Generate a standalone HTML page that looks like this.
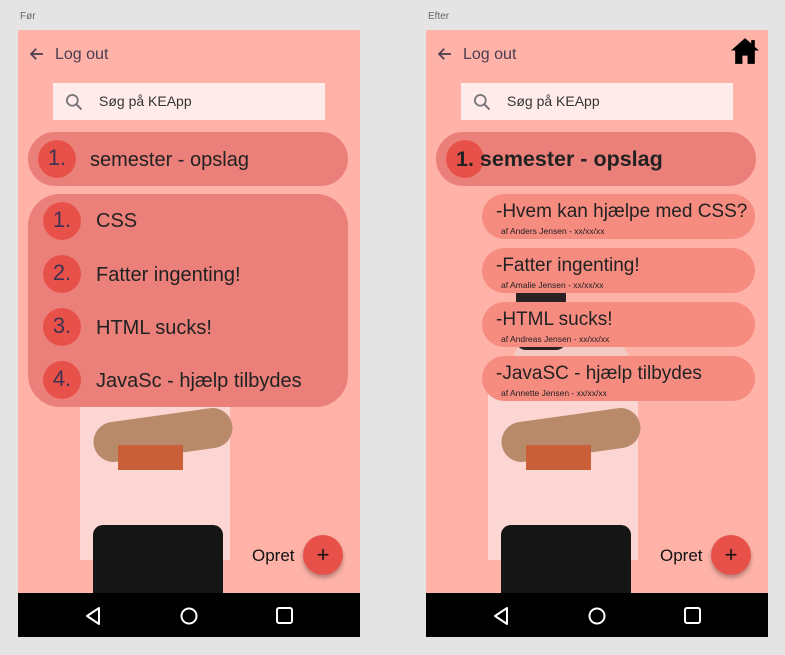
<!DOCTYPE html>
<html><head><style>
*{margin:0;padding:0;box-sizing:border-box}
body{width:785px;height:655px;background:#e4e4e4;position:relative;overflow:hidden;font-family:"Liberation Sans",Arial,sans-serif}
.lbl{position:absolute;top:11px;font-size:10px;color:#666}
.ph{position:absolute;top:30px;width:342px;height:607px;background:#ffb3a8;overflow:hidden}
.a{position:absolute}
.nav{position:absolute;left:0;top:563px;width:342px;height:44px;background:#000}
.back{position:absolute;left:10px;top:15px}
.lo{position:absolute;left:37px;top:16px;font-size:16px;color:#4a3b4f}
.search{position:absolute;left:35px;top:53px;width:272px;height:37px;background:#ffecea}
.search span{position:absolute;left:46px;top:10px;font-size:14px;color:#333}
.pill{position:absolute;background:#ea8079}
.circ{position:absolute;width:38px;height:38px;border-radius:50%;background:#e8514a;color:#3d3350;font-size:22px;text-align:center;line-height:38px}
.circ span{position:relative;top:-1px}
.t{position:absolute;font-size:20px;color:#222}
.it{position:absolute;left:56px;width:273px;height:45px;border-radius:23px;background:#f68b80}
.it b{position:absolute;left:14px;top:7px;font-size:19px;font-weight:normal;color:#222;white-space:nowrap}
.it i{position:absolute;left:19px;top:32px;font-size:8.5px;font-style:normal;color:#222;white-space:nowrap}
.fab{position:absolute;left:285px;top:505px;width:40px;height:40px;border-radius:50%;background:#e8514a;box-shadow:0 3px 5px rgba(0,0,0,.3);text-align:center;line-height:40px;font-size:22px;color:#111}
.op{position:absolute;left:234px;top:516px;font-size:17px;color:#111}
</style></head><body>
<div class="lbl" style="left:20px">Før</div>
<div class="lbl" style="left:428px">Efter</div>

<!-- LEFT -->
<div class="ph" style="left:18px">
 <div class="a" style="left:85px;top:300px;width:120px;height:90px;background:#f3c9c4;border-radius:40px 40px 0 0"></div>
 <div class="a" style="left:62px;top:360px;width:150px;height:170px;background:#fbd6d3"></div>
 <div class="a" style="left:75px;top:495px;width:130px;height:75px;background:#151515;border-radius:10px 10px 0 0"></div>
 <div class="a" style="left:75px;top:385px;width:140px;height:40px;background:#b98a6a;border-radius:20px;transform:rotate(-8deg)"></div>
 <div class="a" style="left:100px;top:415px;width:65px;height:25px;background:#c9603a"></div>
 <svg class="back" width="18" height="18" viewBox="0 0 24 24"><path d="M20 12H5M11 5l-7 7 7 7" fill="none" stroke="#4a3b4f" stroke-width="2.2"/></svg>
 <div class="lo">Log out</div>
 <div class="search"><svg class="a" style="left:11px;top:9px" width="20" height="20" viewBox="0 0 24 24"><circle cx="10" cy="10" r="6.5" fill="none" stroke="#777" stroke-width="2.2"/><path d="M15 15l6 6" stroke="#777" stroke-width="2.4"/></svg><span>Søg på KEApp</span></div>
 <div class="pill" style="left:10px;top:102px;width:320px;height:54px;border-radius:27px"></div>
 <div class="circ" style="left:20px;top:110px"><span>1.</span></div>
 <div class="t" style="left:72px;top:119px">semester - opslag</div>
 <div class="pill" style="left:10px;top:164px;width:320px;height:213px;border-radius:32px"></div>
 <div class="circ" style="left:25px;top:172px"><span>1.</span></div><div class="t" style="left:78px;top:180px">CSS</div>
 <div class="circ" style="left:25px;top:225px"><span>2.</span></div><div class="t" style="left:78px;top:234px">Fatter ingenting!</div>
 <div class="circ" style="left:25px;top:278px"><span>3.</span></div><div class="t" style="left:78px;top:287px">HTML sucks!</div>
 <div class="circ" style="left:25px;top:331px"><span>4.</span></div><div class="t" style="left:78px;top:340px">JavaSc - hjælp tilbydes</div>
 <div class="op">Opret</div><div class="fab">+</div>
 <div class="nav">
  <svg class="a" style="left:66px;top:13px" width="18" height="20" viewBox="0 0 18 20"><path d="M15 2L3 10l12 8z" fill="none" stroke="#fff" stroke-width="2" stroke-linejoin="round"/></svg>
  <svg class="a" style="left:161px;top:13px" width="20" height="20"><circle cx="10" cy="10" r="7.5" fill="none" stroke="#fff" stroke-width="2"/></svg>
  <svg class="a" style="left:257px;top:13px" width="20" height="20"><rect x="2" y="2" width="15" height="15" rx="2" fill="none" stroke="#fff" stroke-width="2"/></svg>
 </div>
</div>

<!-- RIGHT -->
<div class="ph" style="left:426px">
 <div class="a" style="left:85px;top:300px;width:120px;height:90px;background:#f3c9c4;border-radius:40px 40px 0 0"></div>
 <div class="a" style="left:62px;top:360px;width:150px;height:170px;background:#fbd6d3"></div>
 <div class="a" style="left:75px;top:495px;width:130px;height:75px;background:#151515;border-radius:10px 10px 0 0"></div>
 <div class="a" style="left:75px;top:385px;width:140px;height:40px;background:#b98a6a;border-radius:20px;transform:rotate(-8deg)"></div>
 <div class="a" style="left:100px;top:415px;width:65px;height:25px;background:#c9603a"></div>
 <div class="a" style="left:90px;top:240px;width:50px;height:80px;background:#2a2222;border-radius:10px"></div>
 <svg class="back" width="18" height="18" viewBox="0 0 24 24"><path d="M20 12H5M11 5l-7 7 7 7" fill="none" stroke="#4a3b4f" stroke-width="2.2"/></svg>
 <div class="lo">Log out</div>
 <svg class="a" style="left:304px;top:7px" width="30" height="28" viewBox="0 0 29 27"><path d="M14.5 1L1 13h4v13h7v-8h5v8h7V13h4L24 9.5V3h-3.5v3.3z" fill="#000"/></svg>
 <div class="search"><svg class="a" style="left:11px;top:9px" width="20" height="20" viewBox="0 0 24 24"><circle cx="10" cy="10" r="6.5" fill="none" stroke="#777" stroke-width="2.2"/><path d="M15 15l6 6" stroke="#777" stroke-width="2.4"/></svg><span>Søg på KEApp</span></div>
 <div class="pill" style="left:10px;top:102px;width:320px;height:54px;border-radius:27px"></div>
 <div class="circ" style="left:20px;top:110px"></div>
 <div class="t" style="left:30px;top:117px;font-weight:bold;font-size:21.5px">1. semester - opslag</div>
 <div class="it" style="top:164px"><b>-Hvem kan hjælpe med CSS?</b><i>af Anders Jensen - xx/xx/xx</i></div>
 <div class="it" style="top:218px"><b>-Fatter ingenting!</b><i>af Amalie Jensen - xx/xx/xx</i></div>
 <div class="it" style="top:272px"><b>-HTML sucks!</b><i>af Andreas Jensen - xx/xx/xx</i></div>
 <div class="it" style="top:326px"><b>-JavaSC - hjælp tilbydes</b><i>af Annette Jensen - xx/xx/xx</i></div>
 <div class="op">Opret</div><div class="fab">+</div>
 <div class="nav">
  <svg class="a" style="left:66px;top:13px" width="18" height="20" viewBox="0 0 18 20"><path d="M15 2L3 10l12 8z" fill="none" stroke="#fff" stroke-width="2" stroke-linejoin="round"/></svg>
  <svg class="a" style="left:161px;top:13px" width="20" height="20"><circle cx="10" cy="10" r="7.5" fill="none" stroke="#fff" stroke-width="2"/></svg>
  <svg class="a" style="left:257px;top:13px" width="20" height="20"><rect x="2" y="2" width="15" height="15" rx="2" fill="none" stroke="#fff" stroke-width="2"/></svg>
 </div>
</div>
</body></html>
